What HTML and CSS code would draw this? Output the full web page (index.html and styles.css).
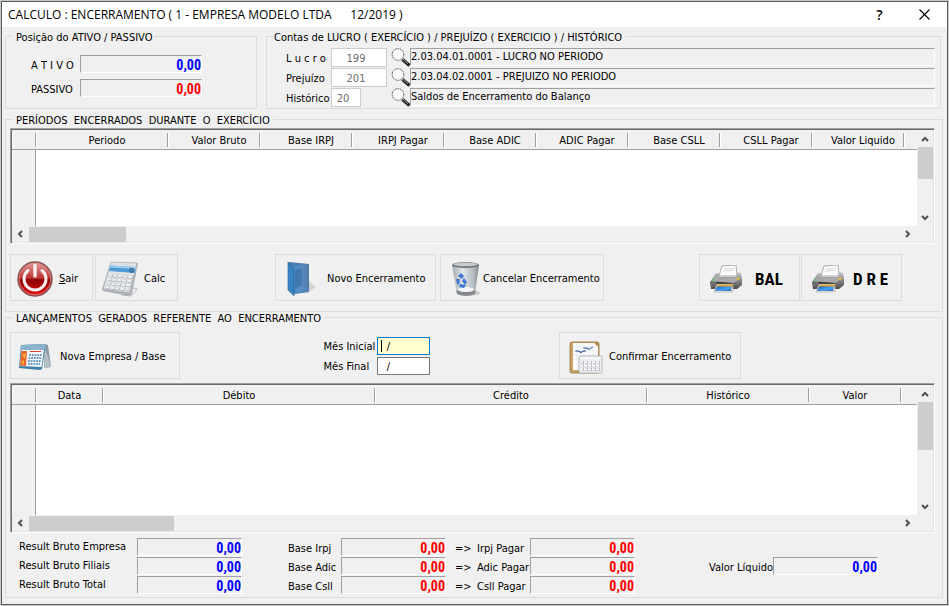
FILE: index.html
```html
<!DOCTYPE html>
<html lang="pt-BR">
<head>
    <meta charset="UTF-8">
    <meta name="viewport" content="width=device-width, initial-scale=1.0">
    <title>Calculo : Encerramento</title>
    <link rel="stylesheet" href="styles.css">
</head>
<body>

<!-- Desenhos usados mais de uma vez -->
<svg class="defs" width="0" height="0" aria-hidden="true">
    <defs>
        <linearGradient id="steel" x1="0" y1="0" x2="0" y2="1">
            <stop offset="0" stop-color="#c9c9c9"/>
            <stop offset="0.5" stop-color="#858585"/>
            <stop offset="1" stop-color="#4c4c4c"/>
        </linearGradient>
        <linearGradient id="photo" x1="0" y1="0" x2="1" y2="1">
            <stop offset="0" stop-color="#1560c4"/>
            <stop offset="0.6" stop-color="#49a0f2"/>
            <stop offset="1" stop-color="#1d62bd"/>
        </linearGradient>
    </defs>
    <symbol id="lens" viewBox="0 0 20 19">
        <path d="M11.5 11.5 L18.500 17.500" stroke="#222" stroke-width="3.4"/>
        <path d="M12 11.500 L17 15.700" stroke="#9a9a9a" stroke-width="1"/>
        <circle cx="7" cy="6.500" r="5.800" fill="#fafafa" stroke="#555" stroke-width="0.900" stroke-dasharray="2 0.600"/>
    </symbol>
    <symbol id="printer" viewBox="0 0 34 28">
        <path d="M13 1 L27 0 L28 11 L10 11 Z" fill="#fbfbfb" stroke="#9b9b9b" stroke-width="0.8"/>
        <path d="M15 4 L25 3 M14 6 L25 5" stroke="#d0d0d0" stroke-width="0.8"/>
        <path d="M7 8 L11 8 L10 12 L27 12 L28 7 L32 8 L33 14 L33 20 L28 24 L2 24 L1 17 Z" fill="url(#steel)"/>
        <path d="M7 10 L2 16 L24 18 L32 13 L28 11 L27 13 L9 13 Z" fill="#a9a9a9"/>
        <path d="M1 17 L24 19 L24 23 L2 21 Z" fill="#6c6c6c"/>
        <path d="M8 17 L24 18 L24 22 L7 21 Z" fill="#2a2a2a"/>
        <path d="M8 19 L24 19 L24 27 L5 27 Z" fill="#e8e4d4" stroke="#a0a0a0" stroke-width="0.5"/>
        <path d="M9 19.500 L24 19.500 L24 22 L8 22 Z" fill="#d8a43a"/>
        <path d="M8 21.500 L23 21.500 L22 26 L6 26 Z" fill="url(#photo)"/>
        <circle cx="4.5" cy="15" r="1" fill="#4fd04f"/>
        <circle cx="29" cy="14" r="1.2" fill="#f0c020"/>
    </symbol>
    <symbol id="up" viewBox="0 0 8 6"><path d="M1 5 L4 2 L7 5" fill="none" stroke="#505050" stroke-width="2"/></symbol>
    <symbol id="down" viewBox="0 0 8 6"><path d="M1 1 L4 4 L7 1" fill="none" stroke="#505050" stroke-width="2"/></symbol>
    <symbol id="left" viewBox="0 0 6 8"><path d="M5 1 L2 4 L5 7" fill="none" stroke="#505050" stroke-width="2"/></symbol>
    <symbol id="right" viewBox="0 0 6 8"><path d="M1 1 L4 4 L1 7" fill="none" stroke="#505050" stroke-width="2"/></symbol>
</svg>

<div class="window">
    <header class="titlebar">
        <h1>CALCULO : ENCERRAMENTO ( 1 - EMPRESA MODELO LTDA      12/2019 )</h1>
        <button type="button" class="title-btn" aria-label="Ajuda">?</button>
        <button type="button" class="title-btn" aria-label="Fechar">
            <svg width="11" height="11" viewBox="0 0 11 11"><path d="M0.5 0.5 L10.5 10.5 M10.5 0.5 L0.5 10.5" stroke="#000" stroke-width="1.1"/></svg>
        </button>
    </header>

    <main class="content">
        <div class="top">
            <fieldset class="position">
                <legend>Posição do ATIVO / PASSIVO</legend>
                <label for="ativo">A T I V O</label>
                <output id="ativo" class="amount blue">0,00</output>
                <label for="passivo">PASSIVO</label>
                <output id="passivo" class="amount red">0,00</output>
            </fieldset>

            <fieldset class="accounts">
                <legend>Contas de LUCRO ( EXERCÍCIO ) / PREJUÍZO ( EXERCICIO ) / HISTÓRICO</legend>
                <label for="lucro">L u c r o</label>
                <input type="text" id="lucro" class="code" value="199" disabled>
                <button type="button" class="search" aria-label="Procurar lucro"><svg width="20" height="19"><use href="#lens"/></svg></button>
                <output class="account">2.03.04.01.0001 - LUCRO NO PERIODO</output>
                <label for="prejuizo">Prejuízo</label>
                <input type="text" id="prejuizo" class="code" value="201" disabled>
                <button type="button" class="search" aria-label="Procurar prejuízo"><svg width="20" height="19"><use href="#lens"/></svg></button>
                <output class="account">2.03.04.02.0001 - PREJUIZO NO PERIODO</output>
                <label for="historico">Histórico</label>
                <input type="text" id="historico" class="code short" value="20" disabled>
                <button type="button" class="search" aria-label="Procurar histórico"><svg width="20" height="19"><use href="#lens"/></svg></button>
                <output class="account">Saldos de Encerramento do Balanço</output>
            </fieldset>
        </div>

        <fieldset class="periods">
            <legend>PERÍODOS  ENCERRADOS  DURANTE  O  EXERCÍCIO</legend>
            <div class="grid">
                <div class="view">
                    <table>
                        <colgroup>
                            <col class="c-sel"><col class="c-periodo">
                            <col class="c-valor"><col class="c-valor"><col class="c-valor"><col class="c-valor">
                            <col class="c-valor"><col class="c-valor"><col class="c-valor"><col class="c-valor">
                            <col>
                        </colgroup>
                        <thead>
                            <tr>
                                <th></th>
                                <th>Periodo</th>
                                <th>Valor Bruto</th>
                                <th>Base IRPJ</th>
                                <th>IRPJ Pagar</th>
                                <th>Base ADIC</th>
                                <th>ADIC Pagar</th>
                                <th>Base CSLL</th>
                                <th>CSLL Pagar</th>
                                <th>Valor Liquido</th>
                                <th></th>
                            </tr>
                        </thead>
                        <tbody><tr><td class="sel"></td><td colspan="10"></td></tr></tbody>
                    </table>
                </div>
                <div class="vscroll">
                    <svg width="8" height="6"><use href="#up"/></svg>
                    <span class="thumb"></span>
                    <svg class="end" width="8" height="6"><use href="#down"/></svg>
                </div>
                <div class="hscroll">
                    <svg width="6" height="8"><use href="#left"/></svg>
                    <span class="thumb"></span>
                    <svg class="end" width="6" height="8"><use href="#right"/></svg>
                </div>
            </div>

            <div class="toolbar">
                <button type="button" class="btn sair">
                    <svg width="36" height="36" viewBox="0 0 36 36">
                        <defs>
                            <linearGradient id="redball" x1="0" y1="0" x2="0" y2="1">
                                <stop offset="0" stop-color="#e2a0a0"/>
                                <stop offset="0.48" stop-color="#bd3030"/>
                                <stop offset="0.52" stop-color="#8c0000"/>
                                <stop offset="1" stop-color="#e81010"/>
                            </linearGradient>
                        </defs>
                        <circle cx="18" cy="18" r="17" fill="url(#redball)" stroke="#8a5050" stroke-width="1.4"/>
                        <circle cx="18" cy="18" r="15.8" fill="none" stroke="#d98a8a" stroke-width="0.8"/>
                        <path d="M11 9.5 A11 11 0 1 0 25 9.5" fill="none" stroke="#f6eeee" stroke-width="3" stroke-linecap="round"/>
                        <path d="M18 4.500 L18 15" stroke="#f6eeee" stroke-width="3.400" stroke-linecap="round"/>
                    </svg>
                    <span><u>S</u>air</span>
                </button>
                <button type="button" class="btn calc">
                    <svg width="36" height="36" viewBox="0 0 36 36">
                        <path d="M28 26 L35 28 L29 35 L20 34 Z" fill="#f4f4f4" stroke="#a8a8a8" stroke-width="0.8"/>
                        <path d="M9 1 L36 2 L30 33 L27 35 L1 30 L0 28 Z" fill="#aeb2b6"/>
                        <path d="M9 1 L35 2 L28 32 L1 28 Z" fill="#dfe2e5" stroke="#a5a9ad" stroke-width="0.7"/>
                        <path d="M8.500 4.500 L34 6 L32.500 12 L7 10 Z" fill="#4c9ad6"/>
                        <path d="M8.500 4.500 L34 6 L33.500 8 L8 6.500 Z" fill="#9fd0f0"/>
                        <path d="M28 7.500 h3 v3.500 h-3 Z" fill="none" stroke="#234b75" stroke-width="0.8"/>
                        <path d="M7 14.500 L31 16.500 M6 18.500 L30 20.500 M5 22.500 L29 24.800 M4 26.500 L28 29" stroke="#a2a9b0" stroke-width="2.800" stroke-dasharray="4 1"/>
                        <path d="M7 14.200 L31 16.200 M6 18.200 L30 20.200 M5 22.200 L29 24.500 M4 26.200 L28 28.700" stroke="#f4f5f7" stroke-width="2" stroke-dasharray="3.400 1.600"/>
                    </svg>
                    <span>Calc</span>
                </button>
                <button type="button" class="btn novo">
                    <svg width="30" height="36" viewBox="0 0 30 36">
                        <defs>
                            <linearGradient id="folder" x1="0" y1="0" x2="1" y2="0">
                                <stop offset="0" stop-color="#3f8fd0"/>
                                <stop offset="0.5" stop-color="#5d92c8"/>
                                <stop offset="1" stop-color="#5478a8"/>
                            </linearGradient>
                        </defs>
                        <path d="M20 32 L29 26 L22 20 Z" fill="#d3d3d3"/>
                        <path d="M2 1 L22 3 L22 31 L8 33 L2 30 Z" fill="#4f7cae"/>
                        <path d="M7 5 L22 3 L22 31 L8 32 Z" fill="url(#folder)" fill-opacity="0.75"/>
                        <path d="M8 9 L15 7 L15 24 L8 27 Z" fill="#3a6aa0" fill-opacity="0.6"/>
                        <path d="M1 1 L6 8 L7 35 L1 29 Z" fill="#3a86c4" stroke="#2668a4" stroke-width="0.7"/>
                    </svg>
                    <span>Novo Encerramento</span>
                </button>
                <button type="button" class="btn cancelar">
                    <svg width="30" height="36" viewBox="0 0 30 36">
                        <defs>
                            <linearGradient id="bin" x1="0" y1="0" x2="1" y2="0">
                                <stop offset="0" stop-color="#a4aab0"/>
                                <stop offset="0.4" stop-color="#e2e6ea"/>
                                <stop offset="0.8" stop-color="#b4bac0"/>
                                <stop offset="1" stop-color="#858b91"/>
                            </linearGradient>
                        </defs>
                        <ellipse cx="21" cy="32" rx="8" ry="2.500" fill="#c9c9c9"/>
                        <path d="M1 4 L28 4 L24 33 Q15 37 6 33 Z" fill="url(#bin)"/>
                        <path d="M5.400 29 Q15 33 24.400 29 L24 33 Q15 37 6 33 Z" fill="#85898d"/>
                        <ellipse cx="15" cy="28.500" rx="8" ry="2.500" fill="#f5f5f5"/>
                        <ellipse cx="14.500" cy="4" rx="13.500" ry="3" fill="#6c7175"/>
                        <ellipse cx="14.500" cy="3.400" rx="12" ry="1.800" fill="#c5cbd0"/>
                        <path d="M7 15 L10 12 L13 15 L11 18 Z M13 17 L16 21 L14 24 L11 20 Z M5 18 L9 18 L8 24 L6 23 Z M9 23 L15 24 L13 27 L8 26 Z" fill="#3f78d2"/>
                    </svg>
                    <span>Cancelar Encerramento</span>
                </button>
                <button type="button" class="btn bal">
                    <svg width="34" height="28"><use href="#printer"/></svg>
                    <span>BAL</span>
                </button>
                <button type="button" class="btn dre">
                    <svg width="34" height="28"><use href="#printer"/></svg>
                    <span>D R E</span>
                </button>
            </div>
        </fieldset>

        <fieldset class="entries">
            <legend>LANÇAMENTOS  GERADOS  REFERENTE  AO  ENCERRAMENTO</legend>
            <div class="filters">
                <button type="button" class="btn nova">
                    <svg width="34" height="28" viewBox="0 0 34 28">
                        <path d="M27 1 L30 2 L33 24 L26 25 Z" fill="#8c9aa4"/>
                        <path d="M27 4 L26 25 L33 24 Z" fill="#b3bfc7"/>
                        <path d="M3 2 L28 1 L24 26 L22 27 L1 25 Z" fill="#3f7fa8"/>
                        <path d="M3 2 L28 1 L27.500 6 L2.500 7 Z" fill="#8ab4cc"/>
                        <path d="M3.500 7 L26 6.500 L23.500 24 L2 23 Z" fill="#f7fafc"/>
                        <path d="M3.500 8 L9 8 L8 23 L2 22.500 Z" fill="#e8642c"/>
                        <path d="M4 12 L8 10 L7 16 Z M3 19 L6 17 L6 22 Z" fill="#f6b33c"/>
                        <path d="M12 8.500 h11" stroke="#d8402c" stroke-width="1"/>
                        <path d="M11 12 H24 M10.500 15 H23.500 M10 18 H23 M10 21 H22" stroke="#3b7ab0" stroke-width="1.600" stroke-dasharray="1.800 0.900"/>
                    </svg>
                    <span>Nova Empresa / Base</span>
                </button>
                <div class="months">
                    <label for="mes-inicial">Mês Inicial</label>
                    <input type="text" id="mes-inicial" class="month active" value="  /">
                    <label for="mes-final">Mês Final</label>
                    <input type="text" id="mes-final" class="month" value="  /">
                </div>
                <button type="button" class="btn confirmar">
                    <svg width="34" height="34" viewBox="0 0 34 34">
                        <rect x="1" y="2" width="29" height="31" rx="2" fill="#c7a466" stroke="#8f6f38" stroke-width="0.8"/>
                        <path d="M4 3 H25 L29 7 V30 H4 Z" fill="#fcfcfd"/>
                        <path d="M8 3 V30 M12 3 V30 M16 3 V30 M20 3 V30 M24 3 V30 M4 7 H29 M4 11 H29 M4 15 H29 M4 19 H29" stroke="#dde1ea" stroke-width="0.600"/>
                        <path d="M25 2 L30 7 V2 Z" fill="#b08c48"/>
                        <path d="M14 8 Q18 7 20 9 Q23 7 24 7 Q21 8.500 20 9.500 Q18 8 14 8 Z M6 11 Q10 10 12 12 Q15 9.500 17 11 Q13 11.500 12 13 Q10 11 6 11 Z" fill="#2c4f98" stroke="#2c4f98" stroke-width="0.400"/>
                        <rect x="10" y="16" width="23" height="17" rx="1" fill="#eceef1" stroke="#a8abb2" stroke-width="0.800"/>
                        <path d="M11 18 H32" stroke="#f8f8f8" stroke-width="2"/>
                        <path d="M12 22.500 H32 M12 26 H32 M12 29.500 H32" stroke="#a8acb4" stroke-width="2.600" stroke-dasharray="3 1"/>
                        <path d="M12 22.300 H32 M12 25.800 H32 M12 29.300 H32" stroke="#fff" stroke-width="1.800" stroke-dasharray="2.200 1.800"/>
                    </svg>
                    <span>Confirmar Encerramento</span>
                </button>
            </div>

            <div class="grid tall">
                <div class="view">
                    <table>
                        <colgroup>
                            <col class="c-sel"><col class="c-data"><col class="c-conta"><col class="c-conta">
                            <col class="c-hist"><col class="c-valor"><col>
                        </colgroup>
                        <thead>
                            <tr>
                                <th></th>
                                <th>Data</th>
                                <th>Débito</th>
                                <th>Crédito</th>
                                <th>Histórico</th>
                                <th>Valor</th>
                                <th></th>
                            </tr>
                        </thead>
                        <tbody><tr><td class="sel"></td><td colspan="6"></td></tr></tbody>
                    </table>
                </div>
                <div class="vscroll">
                    <svg width="8" height="6"><use href="#up"/></svg>
                    <span class="thumb"></span>
                    <svg class="end" width="8" height="6"><use href="#down"/></svg>
                </div>
                <div class="hscroll">
                    <svg width="6" height="8"><use href="#left"/></svg>
                    <span class="thumb"></span>
                    <svg class="end" width="6" height="8"><use href="#right"/></svg>
                </div>
            </div>

            <div class="totals">
                <div class="results">
                    <label for="rb-empresa">Result Bruto Empresa</label>
                    <output id="rb-empresa" class="amount blue">0,00</output>
                    <label for="rb-filiais">Result Bruto Filiais</label>
                    <output id="rb-filiais" class="amount blue">0,00</output>
                    <label for="rb-total">Result Bruto Total</label>
                    <output id="rb-total" class="amount blue">0,00</output>
                </div>
                <div class="taxes">
                    <label for="b-irpj">Base Irpj</label>
                    <output id="b-irpj" class="amount red">0,00</output>
                    <span>=&gt;</span>
                    <label for="p-irpj">Irpj Pagar</label>
                    <output id="p-irpj" class="amount red">0,00</output>
                    <label for="b-adic">Base Adic</label>
                    <output id="b-adic" class="amount red">0,00</output>
                    <span>=&gt;</span>
                    <label for="p-adic">Adic Pagar</label>
                    <output id="p-adic" class="amount red">0,00</output>
                    <label for="b-csll">Base Csll</label>
                    <output id="b-csll" class="amount red">0,00</output>
                    <span>=&gt;</span>
                    <label for="p-csll">Csll Pagar</label>
                    <output id="p-csll" class="amount red">0,00</output>
                </div>
                <div class="net">
                    <label for="liquido">Valor Líquido</label>
                    <output id="liquido" class="amount blue">0,00</output>
                </div>
            </div>
        </fieldset>
    </main>
</div>

</body>
</html>
```
FILE: styles.css
```css
* {
    box-sizing: border-box;
}
body {
    margin: 0;
    padding: 1px;
    background-color: #c8c8c8;
    font-family: "DejaVu Sans Condensed", "DejaVu Sans", sans-serif;
    font-size: 11px;
    line-height: 14px;
    color: #000;
}
.defs {
    position: absolute;
}
button, input {
    font: inherit;
    color: inherit;
}
svg {
    display: block;
    flex: none;
}

/* Janela */
.window {
    border: 1px solid #5c5c5c;
    background-color: #f0f0f0;
}
.titlebar {
    display: flex;
    align-items: center;
    height: 25px;
    padding-left: 6px;
    background-color: #fff;
    font-family: "Open Sans", sans-serif;
}
.titlebar h1 {
    flex: 1;
    margin: 0;
    font-size: 12px;
    font-weight: 400;
    white-space: pre;
}
.title-btn {
    display: flex;
    align-items: center;
    justify-content: center;
    width: 45px;
    height: 25px;
    padding: 0;
    border: 0;
    background: none;
    font-size: 14px;
    font-weight: 600;
}
.content {
    padding: 4px 4px 6px 3px;
}

/* Grupos */
fieldset {
    min-width: 0;
    margin: 0;
    padding: 0 7px 0 4px;
    border: 1px solid #dcdcdc;
}
legend {
    height: 11px;
    margin-left: 2px;
    padding: 0 3px 0 4px;
    line-height: 13px;
    white-space: pre;
}
.top {
    display: flex;
    gap: 9px;
    margin-bottom: 5px;
}
.position {
    display: grid;
    grid-template-columns: 49px 122px;
    grid-auto-rows: 18px;
    row-gap: 6px;
    width: 252px;
    padding: 13px 0 11px 25px;
}
.position legend {
    margin-left: -19px;
}
.accounts {
    flex: 1;
    display: grid;
    grid-template-columns: 45px 60px 19px 1fr;
    grid-auto-rows: 18px;
    row-gap: 2px;
    margin-right: 2px;
    padding: 6px 5px 2px 19px;
}
.accounts legend {
    margin-left: -13px;
    padding-left: 1px;
}
label {
    line-height: 22px;
    white-space: nowrap;
}
.amount, .account {
    height: 18px;
    border: 1px solid #a0a0a0;
    border-right-color: #fff;
    border-bottom-color: #fff;
    overflow: hidden;
}
.account {
    line-height: 16px;
}
.amount {
    font-family: "Roboto Condensed", Roboto, sans-serif;
    font-size: 14px;
    font-weight: 700;
    line-height: 19px;
    text-align: right;
}
.blue {
    color: #00f;
}
.red {
    color: #f00;
}
.code {
    width: 56px;
    height: 19px;
    padding: 1px 6px 0 0;
    border: 1px solid #ccc;
    background-color: #fff;
    color: #6d6d6d;
    text-align: center;
}
.code.short {
    width: 30px;
}
.search {
    width: 19px;
    height: 19px;
    padding: 0;
    border: 0;
    background: none;
}

/* Grades */
.grid {
    display: grid;
    grid-template-columns: 1fr 16px;
    grid-template-rows: 96px 16px;
    border: 1px solid #a0a0a0;
    border-right-color: #fff;
    border-bottom-color: #fff;
    box-shadow: inset 1px 1px #696969, inset -1px -1px #e3e3e3;
    padding: 1px;
}
.grid.tall {
    grid-template-rows: 130px 16px;
}
.view {
    min-width: 0;
    overflow: hidden;
    background-color: #fff;
}
table {
    width: 100%;
    height: 100%;
    table-layout: fixed;
    border-collapse: separate;
    border-spacing: 0;
}
.c-sel {
    width: 24px;
}
.c-periodo {
    width: 132px;
}
.c-valor {
    width: 92px;
}
.c-data {
    width: 67px;
}
.c-conta {
    width: 272px;
}
.c-hist {
    width: 162px;
}
th {
    height: 20px;
    padding: 3px 0 0;
    border-bottom: 1px solid #a0a0a0;
    background: linear-gradient(#a0a0a0, #a0a0a0) right 0 center / 1px 14px no-repeat,
                linear-gradient(#fff, #fff) left 0 center / 1px 14px no-repeat #f0f0f0;
    font-weight: 400;
    white-space: nowrap;
}
th:last-child {
    background: linear-gradient(#fff, #fff) left 0 center / 1px 14px no-repeat #f0f0f0;
}
.periods th {
    padding-left: 10px;
}
td {
    padding: 0;
}
.sel {
    border-left: 1px solid #fff;
    border-right: 1px solid #a0a0a0;
    background-color: #f0f0f0;
}
.vscroll, .hscroll {
    display: flex;
    align-items: center;
    background-color: #f0f0f0;
}
.vscroll {
    flex-direction: column;
    padding: 6px 0 5px;
}
.hscroll {
    padding: 0 6px 0 5px;
}
.thumb {
    background-color: #cdcdcd;
}
.vscroll .thumb {
    width: 15px;
    height: 32px;
    margin-top: 5px;
}
.hscroll .thumb {
    width: 97px;
    height: 15px;
    margin-left: 6px;
}
.tall .vscroll .thumb {
    height: 48px;
}
.tall .hscroll .thumb {
    width: 145px;
}
.vscroll .end {
    margin-top: auto;
}
.hscroll .end {
    margin-left: auto;
}

/* Botões */
.btn {
    display: flex;
    align-items: center;
    flex: none;
    height: 47px;
    padding: 2px 0 0 7px;
    border: 1px solid #dcdcdc;
    background-color: #f0f0f0;
    white-space: nowrap;
}
.periods {
    padding-top: 3px;
    padding-bottom: 10px;
}
.toolbar {
    display: flex;
    margin-top: 10px;
}
.sair, .calc {
    width: 83px;
    gap: 6px;
    margin-right: 2px;
    padding-left: 6px;
}
.novo {
    width: 161px;
    gap: 10px;
    margin-left: auto;
    padding-left: 11px;
}
.cancelar {
    width: 164px;
    gap: 2px;
    margin-left: 4px;
    padding-left: 10px;
}
.bal, .dre {
    width: 101px;
    gap: 12px;
    padding-left: 9px;
    font-family: "Roboto Condensed", Roboto, sans-serif;
    font-size: 17px;
    font-weight: 700;
}
.bal {
    margin-left: auto;
}
.dre {
    margin: 0 33px 0 1px;
    gap: 8px;
}

/* Lançamentos */
.entries {
    padding-top: 9px;
    padding-bottom: 3px;
}
.filters {
    display: flex;
    margin-bottom: 4px;
}
.nova {
    width: 170px;
    gap: 8px;
}
.months {
    display: grid;
    grid-template-columns: 53px 53px;
    grid-auto-rows: 18px;
    row-gap: 2px;
    align-content: start;
    margin: 0 auto;
    padding: 5px 0 0 14px;
}
.months label {
    line-height: 20px;
}
.month {
    width: 53px;
    height: 18px;
    padding: 0 3px;
    border: 1px solid #7a7a7a;
    background-color: #fff;
    white-space: pre;
}
.month.active {
    border-color: #0078d7;
    background: linear-gradient(#000, #000) left 3px center / 1px 12px no-repeat #ffffd0;
}
.confirmar {
    width: 182px;
    gap: 6px;
    margin-right: 194px;
    padding-left: 9px;
}
.totals {
    display: flex;
    margin-top: 5px;
    padding-left: 9px;
}
.results, .taxes {
    display: grid;
    grid-auto-rows: 18px;
    row-gap: 1px;
}
.results {
    grid-template-columns: 118px 105px;
}
.results label {
    line-height: 17px;
}
.taxes {
    grid-template-columns: 53px 105px 31px 53px 105px;
    margin-left: 46px;
}
.taxes span {
    padding-left: 9px;
    line-height: 22px;
}
.net {
    display: grid;
    grid-template-columns: auto 105px;
    grid-auto-rows: 18px;
    align-self: center;
    margin: 0 57px 0 auto;
}
```
